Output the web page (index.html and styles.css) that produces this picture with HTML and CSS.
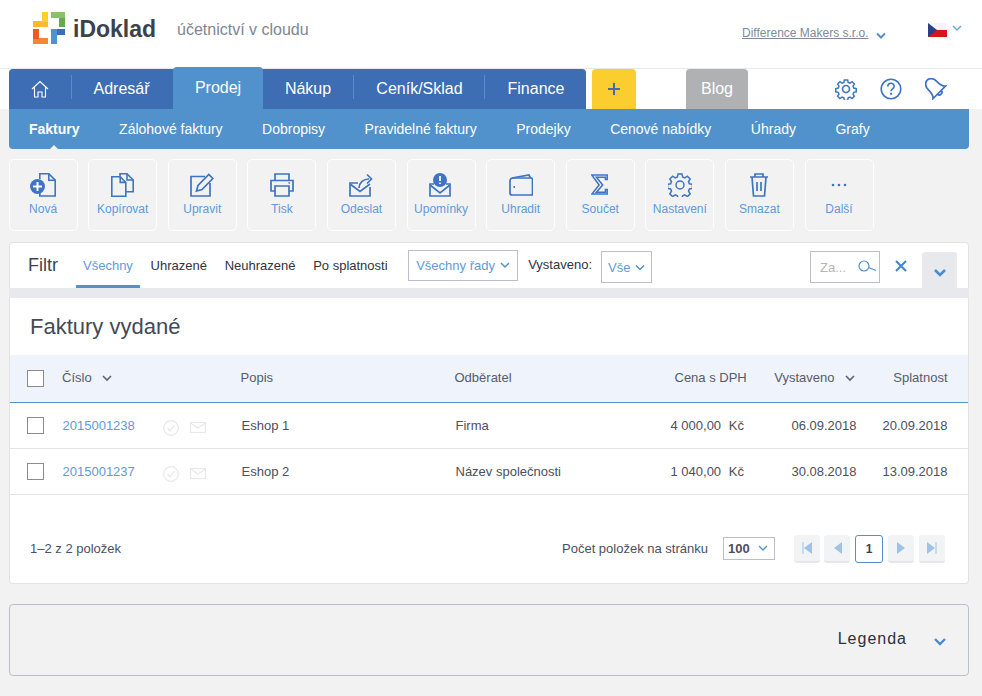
FILE: index.html
```html
<!DOCTYPE html>
<html lang="cs">
<head>
<meta charset="utf-8">
<title>iDoklad</title>
<link rel="stylesheet" href="styles.css">
</head>
<body>
<header class="top">
  <div class="brand">
    <svg class="logo" width="32" height="32" viewBox="0 0 32 32">
      <path d="M0 9h15v6H0z" fill="#fbb92e"/>
      <path d="M9 0h6v10H9z" fill="#fccf2e"/>
      <path d="M18 0h14v6H18z" fill="#8cc06a"/>
      <path d="M26 6h6v9h-6z" fill="#6aa84f"/>
      <path d="M0 26h15v6H0z" fill="#f0883a"/>
      <path d="M0 17h6v10H0z" fill="#ee5a24"/>
      <path d="M18 17h6v15h-6z" fill="#5191cc"/>
      <path d="M24 17h8v6h-8z" fill="#3d6db3"/>
    </svg>
    <span class="brand-name">iDoklad</span>
    <span class="tagline">účetnictví v cloudu</span>
  </div>
  <div class="account">
    <a class="company">Difference Makers s.r.o.</a>
    <svg class="chev company-chev" width="10" height="7" viewBox="0 0 10 7"><path d="M1 1.500l4 4 4-4" fill="none" stroke="#5191cc" stroke-width="2"/></svg>
    <svg class="flag" width="19" height="14" viewBox="0 0 19 14"><rect width="19" height="7" fill="#f4f4f4"/><rect y="7" width="19" height="7" fill="#d7141a"/><path d="M0 0l9 7-9 7z" fill="#2b3f87"/></svg>
    <svg class="chev flag-chev" width="10" height="7" viewBox="0 0 10 7"><path d="M1 1l4 4 4-4" fill="none" stroke="#6fa5d8" stroke-width="1.500"/></svg>
  </div>
</header>

<nav class="mainnav">
  <div class="tabs">
    <a class="tab home"><svg width="18" height="18" viewBox="0 0 18 18"><path d="M1 9l8-7.500L17 9M3.500 7.500V17H7v-5h4v5h3.500V7.500" fill="none" stroke="#fff" stroke-width="1.100"/></svg></a>
    <a class="tab t-adr">Adresář</a>
    <a class="tab active">Prodej</a>
    <a class="tab t-nak">Nákup</a>
    <a class="tab t-cen">Ceník/Sklad</a>
    <a class="tab t-fin">Finance</a>
  </div>
  <a class="plus"><svg width="14" height="14" viewBox="0 0 14 14"><path d="M7 1v12M1 7h12" stroke="#3d6db3" stroke-width="2"/></svg></a>
  <a class="blog">Blog</a>
  <div class="nav-icons">
    <svg width="22" height="22" viewBox="0 0 24 24" fill="none" stroke="#3f74c2" stroke-width="1.800"><circle cx="12" cy="12" r="3.800"/><path d="M10 1h4l.6 3 2.200.9 2.600-1.700 2.800 2.800-1.700 2.600.9 2.200 3 .6v4l-3 .6-.9 2.200 1.700 2.600-2.800 2.800-2.600-1.700-2.200.9-.6 3h-4l-.6-3-2.200-.9-2.600 1.700-2.800-2.800 1.700-2.600-.9-2.200-3-.6v-4l3-.6.9-2.200-1.700-2.600 2.800-2.800 2.600 1.700 2.200-.9z" transform="translate(1.200 1.200) scale(.9)"/></svg>
    <svg width="22" height="22" viewBox="0 0 22 22" fill="none" stroke="#3f74c2" stroke-width="1.600"><circle cx="11" cy="11" r="9.800"/><path d="M7.800 8.500c0-4.200 6.400-4.200 6.400-.2 0 2.600-3.200 2.600-3.200 5"/><path d="M11 14.800v2" stroke-width="1.900"/></svg>
    <svg class="bell" width="22" height="22" viewBox="-11 -11 22 22" fill="none" stroke="#3f74c2" stroke-width="1.500"><g transform="translate(-1.300 -1.300) rotate(-45) scale(1.180)"><path d="M-7.500 5.500C-5 3.500-5 0-5-3c0-3.600 2.400-6 5-6s5 2.400 5 6c0 3 0 6.500 2.500 8.500z"/><path d="M-2.200 5.500a2.200 2.200 0 0 0 4.400 0"/></g></svg>
  </div>
</nav>

<nav class="subnav">
  <a class="sub current">Faktury</a>
  <a class="sub">Zálohové faktury</a>
  <a class="sub">Dobropisy</a>
  <a class="sub">Pravidelné faktury</a>
  <a class="sub">Prodejky</a>
  <a class="sub">Cenové nabídky</a>
  <a class="sub">Úhrady</a>
  <a class="sub">Grafy</a>
</nav>

<div class="toolbar">
  <a class="tool"><svg viewBox="0 0 26 24" width="26" height="24" fill="none" stroke="#3f74c2" stroke-width="1.600"><path d="M9.800 6V.8h9l6.400 6.400v15.800H9.800v-3"/><path d="M18.800.8v6.400h6.400"/><circle cx="7.500" cy="13.500" r="7.500" fill="#3f74c2" stroke="none"/><path d="M7.500 9v9M3 13.500h9" stroke="#fff" stroke-width="2"/></svg><span>Nová</span></a>
  <a class="tool"><svg viewBox="0 0 24 24" width="24" height="24" fill="none" stroke="#3f74c2" stroke-width="1.600"><path d="M.8 3.800h8.400l5.600 5.600v13.800H.8z"/><path d="M9.200 3.800v5.600h5.600"/><path d="M9 3.500V.8h7l6.200 6.200v11.800h-7"/><path d="M16 .8V7h6.200"/></svg><span>Kopírovat</span></a>
  <a class="tool"><svg viewBox="0 0 24 24" width="24" height="24" fill="none" stroke="#3f74c2" stroke-width="1.700"><path d="M15 3.500H1V23h19V10"/><path d="M6.500 18l1.500-5.500L18.800 1.500l4 4L12 16.500z"/></svg><span>Upravit</span></a>
  <a class="tool"><svg viewBox="0 0 24 24" width="24" height="24" fill="none" stroke="#3f74c2" stroke-width="1.700"><path d="M5 7.500V1h14v6.500"/><path d="M5 18H1V7.500h22V18h-4"/><path d="M5 13h14v10H5z"/><path d="M18.500 10h1.500"/></svg><span>Tisk</span></a>
  <a class="tool"><svg viewBox="0 0 24 24" width="24" height="24" fill="none" stroke="#3f74c2" stroke-width="1.700"><path d="M9 10H1v13h20v-9"/><path d="M1 11l10 7.500 10-7.500"/><path d="M10 15c0-5 4-9 10-9"/><path d="M18 1.500l4.500 4.500L18 10.500"/></svg><span>Odeslat</span></a>
  <a class="tool"><svg viewBox="0 0 24 24" width="24" height="24" fill="none" stroke="#3f74c2" stroke-width="1.700"><path d="M5 11H1v12h20V11h-4"/><path d="M1 12l10 8 10-8"/><circle cx="11" cy="7" r="7" fill="#3f74c2" stroke="none"/><path d="M11 3v5M11 9.500v1.500" stroke="#fff" stroke-width="1.700"/></svg><span>Upomínky</span></a>
  <a class="tool"><svg viewBox="0 0 24 24" width="24" height="24" fill="none" stroke="#3f74c2" stroke-width="1.700"><path d="M1 8c0-2 1-3 3-3h18c1 0 1.500.5 1.500 1.500V22H3c-1.500 0-2-1-2-2z"/><path d="M3 5l17-3 1.500 3"/><path d="M4.500 14h1.500" stroke-width="2"/></svg><span>Uhradit</span></a>
  <a class="tool"><svg viewBox="0 0 20 24" width="18" height="24" fill="none" stroke="#3f74c2" stroke-width="1.700"><path d="M1 1h17v5h-2V3.500H6l7 8.500-7 8h10v-3h2v5H1l8-10z"/></svg><span>Součet</span></a>
  <a class="tool"><svg width="24" height="24" viewBox="0 0 24 24" fill="none" stroke="#3f74c2" stroke-width="1.500"><circle cx="12" cy="12" r="4"/><path d="M10 1h4l.6 3 2.200.9 2.600-1.700 2.800 2.800-1.700 2.600.9 2.200 3 .6v4l-3 .6-.9 2.200 1.700 2.600-2.800 2.800-2.600-1.700-2.200.9-.6 3h-4l-.6-3-2.200-.9-2.600 1.700-2.800-2.800 1.700-2.600-.9-2.200-3-.6v-4l3-.6.9-2.200-1.700-2.600 2.800-2.800 2.600 1.700 2.200-.9z"/></svg><span>Nastavení</span></a>
  <a class="tool"><svg viewBox="0 0 20 24" width="20" height="24" fill="none" stroke="#3f74c2" stroke-width="1.700"><path d="M1 4h18M6 4V1h8v3M3 4l1.500 19h11L17 4"/><path d="M8 9v9M12 9v9"/></svg><span>Smazat</span></a>
  <a class="tool"><svg viewBox="0 0 24 24" width="24" height="24"><g fill="#3f74c2"><circle cx="6" cy="12" r="1.300"/><circle cx="12" cy="12" r="1.300"/><circle cx="18" cy="12" r="1.300"/></g></svg><span>Další</span></a>
</div>

<section class="filter">
  <span class="filter-title">Filtr</span>
  <a class="ftab on">Všechny</a>
  <a class="ftab">Uhrazené</a>
  <a class="ftab">Neuhrazené</a>
  <a class="ftab">Po splatnosti</a>
  <div class="select series"><span>Všechny řady</span><svg width="10" height="7" viewBox="0 0 10 7"><path d="M1 1l4 4 4-4" fill="none" stroke="#5191cc" stroke-width="1.500"/></svg></div>
  <label class="flabel">Vystaveno:</label>
  <div class="select issued"><span>Vše</span><svg width="10" height="7" viewBox="0 0 10 7"><path d="M1 1.500l4 4 4-4" fill="none" stroke="#5191cc" stroke-width="1.500"/></svg></div>
  <div class="search"><span>Za...</span><svg width="20" height="13" viewBox="0 0 20 13" fill="none" stroke="#5191cc" stroke-width="1.200"><circle cx="6" cy="6" r="5"/><path d="M10.500 7.500l7.500 3"/></svg></div>
  <a class="clear"><svg width="12" height="12" viewBox="0 0 12 12"><path d="M1 1l10 10M11 1L1 11" stroke="#3f86cb" stroke-width="2"/></svg></a>
  <a class="expand"><svg width="12" height="8" viewBox="0 0 12 8"><path d="M1 1l5 5 5-5" fill="none" stroke="#4a8bcd" stroke-width="2.600"/></svg></a>
</section>
<div class="divider"></div>

<main class="card">
  <h1>Faktury vydané</h1>
  <div class="row head">
    <span class="cb"><i class="box"></i></span>
    <span class="c-num">Číslo<svg class="sort" width="10" height="7" viewBox="0 0 10 7"><path d="M1 1l4 4 4-4" fill="none" stroke="#5f6675" stroke-width="1.700"/></svg></span>
    <span class="c-desc">Popis</span>
    <span class="c-client">Odběratel</span>
    <span class="c-price">Cena s DPH</span>
    <span class="c-date">Vystaveno<svg class="sort" width="10" height="7" viewBox="0 0 10 7"><path d="M1 1l4 4 4-4" fill="none" stroke="#5f6675" stroke-width="1.700"/></svg></span>
    <span class="c-due">Splatnost</span>
  </div>
  <div class="row item">
    <span class="cb"><i class="box"></i></span>
    <span class="c-num"><a>2015001238</a></span>
    <span class="c-state">
      <svg width="16" height="16" viewBox="0 0 16 16" fill="none" stroke="#e8e8e8" stroke-width="1.200"><circle cx="8" cy="8" r="7.300"/><path d="M4.500 8l2.500 3 4.500-6"/></svg>
      <svg width="16" height="11" viewBox="0 0 16 11" fill="none" stroke="#e8e8e8" stroke-width="1.200"><rect x=".5" y=".5" width="15" height="10"/><path d="M.5 1l7.500 5 7.500-5"/></svg>
    </span>
    <span class="c-desc d">Eshop 1</span>
    <span class="c-client d">Firma</span>
    <span class="c-price">4 000,00 <em>Kč</em></span>
    <span class="c-date">06.09.2018</span>
    <span class="c-due">20.09.2018</span>
  </div>
  <div class="row item">
    <span class="cb"><i class="box"></i></span>
    <span class="c-num"><a>2015001237</a></span>
    <span class="c-state">
      <svg width="16" height="16" viewBox="0 0 16 16" fill="none" stroke="#e8e8e8" stroke-width="1.200"><circle cx="8" cy="8" r="7.300"/><path d="M4.500 8l2.500 3 4.500-6"/></svg>
      <svg width="16" height="11" viewBox="0 0 16 11" fill="none" stroke="#e8e8e8" stroke-width="1.200"><rect x=".5" y=".5" width="15" height="10"/><path d="M.5 1l7.500 5 7.500-5"/></svg>
    </span>
    <span class="c-desc d">Eshop 2</span>
    <span class="c-client d">Název společnosti</span>
    <span class="c-price">1 040,00 <em>Kč</em></span>
    <span class="c-date">30.08.2018</span>
    <span class="c-due">13.09.2018</span>
  </div>
  <div class="pager-row">
    <span class="count">1–2 z 2 položek</span>
    <span class="per">Počet položek na stránku</span>
    <div class="select size"><b>100</b><svg width="10" height="7" viewBox="0 0 10 7"><path d="M1 1l4 4 4-4" fill="none" stroke="#5191cc" stroke-width="1.300"/></svg></div>
    <div class="pages">
      <a class="pg first"><svg width="10" height="12" viewBox="0 0 10 12"><path d="M1 0v12" stroke="#c5dbf0" stroke-width="2"/><path d="M10 0v12L2 6z" fill="#9fc3e6"/></svg></a>
      <a class="pg"><svg width="9" height="12" viewBox="0 0 9 12"><path d="M9 0v12L1 6z" fill="#9fc3e6"/></svg></a>
      <a class="pg cur">1</a>
      <a class="pg"><svg width="9" height="12" viewBox="0 0 9 12"><path d="M0 0v12l8-6z" fill="#9fc3e6"/></svg></a>
      <a class="pg"><svg width="10" height="12" viewBox="0 0 10 12"><path d="M0 0v12l8-6z" fill="#9fc3e6"/><path d="M9 0v12" stroke="#c5dbf0" stroke-width="2"/></svg></a>
    </div>
  </div>
</main>

<section class="legend">
  <span>Legenda</span>
  <svg width="12" height="8" viewBox="0 0 12 8"><path d="M1 1l5 5 5-5" fill="none" stroke="#4a8bcd" stroke-width="2.400"/></svg>
</section>
</body>
</html>
```
FILE: styles.css
```css
* { box-sizing: border-box; }
html, body { margin: 0; padding: 0; }
body { width: 982px; height: 696px; overflow: hidden; background: #f2f2f2; font-family: "Liberation Sans", Arial, sans-serif; font-size: 13px; color: #4a5060; }
a { cursor: pointer; }

.top { height: 69px; background: #fff; border-bottom: 1px solid #e9e9e9; display: flex; justify-content: space-between; }
.brand { display: flex; align-items: flex-start; padding: 12px 0 0 33px; }
.logo { flex: none; }
.brand-name { margin: 3px 0 0 8px; font-size: 23px; line-height: 28px; font-weight: 700; color: #3b4248; width: 104px; }
.tagline { margin-top: 9px; font-size: 16px; line-height: 18px; color: #808690; }
.account { position: relative; width: 300px; }
.company { position: absolute; left: 60px; top: 26px; font-size: 12px; line-height: 14px; color: #808a9c; text-decoration: underline; white-space: nowrap; }
.company-chev { position: absolute; left: 194px; top: 32px; }
.flag { position: absolute; left: 246px; top: 23px; }
.flag-chev { position: absolute; left: 270px; top: 25px; }

.mainnav { height: 40px; background: #fff; padding-left: 9px; display: flex; align-items: flex-end; }
.tabs { display: flex; width: 577px; height: 40px; background: #3d6db3; border-radius: 4px 4px 0 0; }
.tab { position: relative; height: 40px; display: flex; align-items: center; justify-content: center; color: #fff; font-size: 16px; }
.tab::before { content: ""; position: absolute; left: 0; top: 6px; bottom: 10px; border-left: 1px solid #5c8bc9; }
.home { width: 62px; }
.home::before, .active::before, .t-nak::before { display: none; }
.t-adr { width: 102px; padding-right: 1px; }
.active { width: 90px; height: 42px; margin-top: -2px; background: #5191cc; border-radius: 4px 4px 0 0; }
.t-nak { width: 90px; }
.t-cen { width: 131px; padding-left: 2px; }
.t-fin { width: 102px; padding-left: 2px; }
.plus { width: 44px; height: 40px; margin-left: 6px; background: #fccd2e; border-radius: 4px 4px 0 0; display: flex; align-items: center; justify-content: center; }
.blog { width: 62px; height: 40px; margin-left: 50px; background: #b0b1b3; color: #fff; font-size: 16px; border-radius: 4px 4px 0 0; display: flex; align-items: center; justify-content: center; }
.nav-icons { margin-left: 87px; height: 40px; display: flex; align-items: center; gap: 23px; }

.subnav { margin: 0 13px 0 9px; height: 40px; background: #5191cc; border-radius: 0 0 4px 4px; display: flex; align-items: center; padding-left: 20px; gap: 39.500px; }
.sub { position: relative; color: #fff; font-size: 14px; }
.current { font-weight: 700; }
.current::after { content: ""; position: absolute; left: 50%; bottom: -14px; margin-left: -6px; border: 6px solid transparent; border-top: 0; border-bottom-color: #f2f2f2; }

.toolbar { display: flex; gap: 10.600px; padding: 10px 0 0 8.600px; }
.tool { width: 69px; height: 72px; flex: none; border: 1px solid #fff; border-radius: 5px; display: flex; flex-direction: column; align-items: center; color: #5f9ad9; font-size: 12px; line-height: 14px; }
.tool svg { height: 24px; margin-top: 13px; }
.tool span { margin-top: 5px; }

.filter { margin: 11px 13px 0 9px; height: 46px; padding-left: 18px; background: #fff; border: 1px solid #e3e3e3; border-bottom: 0; border-radius: 4px 4px 0 0; display: flex; align-items: flex-start; }
.filter-title { width: 48px; margin-top: 12px; font-size: 18px; line-height: 20px; color: #3d4350; }
.ftab { height: 45px; padding: 15px 7px 0; margin-right: 3.700px; font-size: 13px; line-height: 16px; color: #2f3440; white-space: nowrap; }
.ftab.on { color: #5f9ad9; border-bottom: 3px solid #5191cc; }
.select { border: 1px solid #b9bfcf; background: #fff; display: flex; align-items: center; color: #5f9ad9; font-size: 13px; }
.series { width: 110px; height: 31px; margin: 7px 0 0 9.900px; padding: 0 7px; justify-content: space-between; }
.flabel { margin: 14px 9px 0 10px; font-size: 13px; line-height: 16px; color: #2f3440; white-space: nowrap; }
.issued { width: 51px; height: 32px; margin-top: 8px; padding: 0 6px; justify-content: space-between; }
.search { width: 70px; height: 32px; margin: 8px 0 0 158px; border: 1px solid #b9bfcf; padding-left: 9px; display: flex; align-items: center; color: #b5b5b5; font-size: 13px; position: relative; }
.search svg { position: absolute; right: 1px; top: 8px; }
.clear { margin: 17px 0 0 15px; line-height: 0; }
.expand { width: 35px; height: 36px; margin: 9px 0 0 15px; background: #e8e9ec; border-radius: 3px 3px 0 0; display: flex; align-items: center; justify-content: center; padding-top: 6px; }
.divider { margin: 0 13px 0 9px; height: 10px; background: #e8e9ec; }

.card { margin: 0 13px 0 9px; height: 286px; background: #fff; border: 1px solid #e3e3e3; border-top: 0; border-radius: 0 0 4px 4px; }
h1 { margin: 0; padding-left: 20px; height: 57px; font-size: 22px; font-weight: 400; line-height: 58px; color: #444a55; }
.row { display: flex; align-items: center; white-space: nowrap; }
.head { height: 48px; padding-bottom: 2px; background: #eff3fb; border-bottom: 1px solid #5191cc; color: #555c6b; }
.item { height: 46px; border-bottom: 1px solid #e3e3e3; }
.cb { width: 52px; padding-left: 17px; display: flex; }
.head .cb { padding-top: 2px; }
.box { width: 17px; height: 17px; border: 1px solid #8a8a8f; background: #fff; }
.c-num { width: 100px; }
.c-num a { color: #5f9ad9; margin-left: .5px; }
.sort { margin-left: 10px; }
.c-state { width: 79px; margin-right: -79px; margin-left: 1px; margin-top: 4px; display: flex; align-items: center; gap: 11px; }
.c-desc { width: 214px; margin-left: 78.500px; }
.c-client { width: 222px; }
.c-client.d { width: 219px; }
.c-price { width: 70px; text-align: right; margin-left: -2px; }
.c-price em { font-style: normal; margin-left: 4px; }
.item .c-price { margin-left: -4px; width: 72px; }
.c-date { width: 110px; text-align: right; }
.item .c-date { width: 114px; }
.c-due { width: 91px; text-align: right; }
.head .c-due { width: 93px; }
.pager-row { height: 88px; padding: 19px 23px 0 20px; display: flex; align-items: center; }
.count { width: 532px; flex: none; }
.per { width: 161px; flex: none; }
.size { width: 52px; height: 23px; justify-content: space-between; padding: 0 6px 0 4px; color: #4a5060; }
.pages { margin-left: 19px; display: flex; gap: 5px; }
.pg { width: 26px; height: 28px; background: #f2f3f5; border-bottom: 2px solid #e6e7ea; border-radius: 3px; display: flex; align-items: center; justify-content: center; }
.first { margin-right: -1px; }
.pg.cur { width: 28px; background: #fff; border: 1px solid #5191cc; color: #3c424e; font-weight: 700; font-size: 12px; }

.legend { margin: 20px 13px 0 9px; height: 72px; background: #f2f2f3; border: 1px solid #b9bfcf; border-radius: 4px; display: flex; align-items: center; justify-content: flex-end; padding: 0 22px 2px 0; font-size: 16px; letter-spacing: 1px; color: #2b303a; }
.legend svg { margin: 6px 0 0 27px; }
```
